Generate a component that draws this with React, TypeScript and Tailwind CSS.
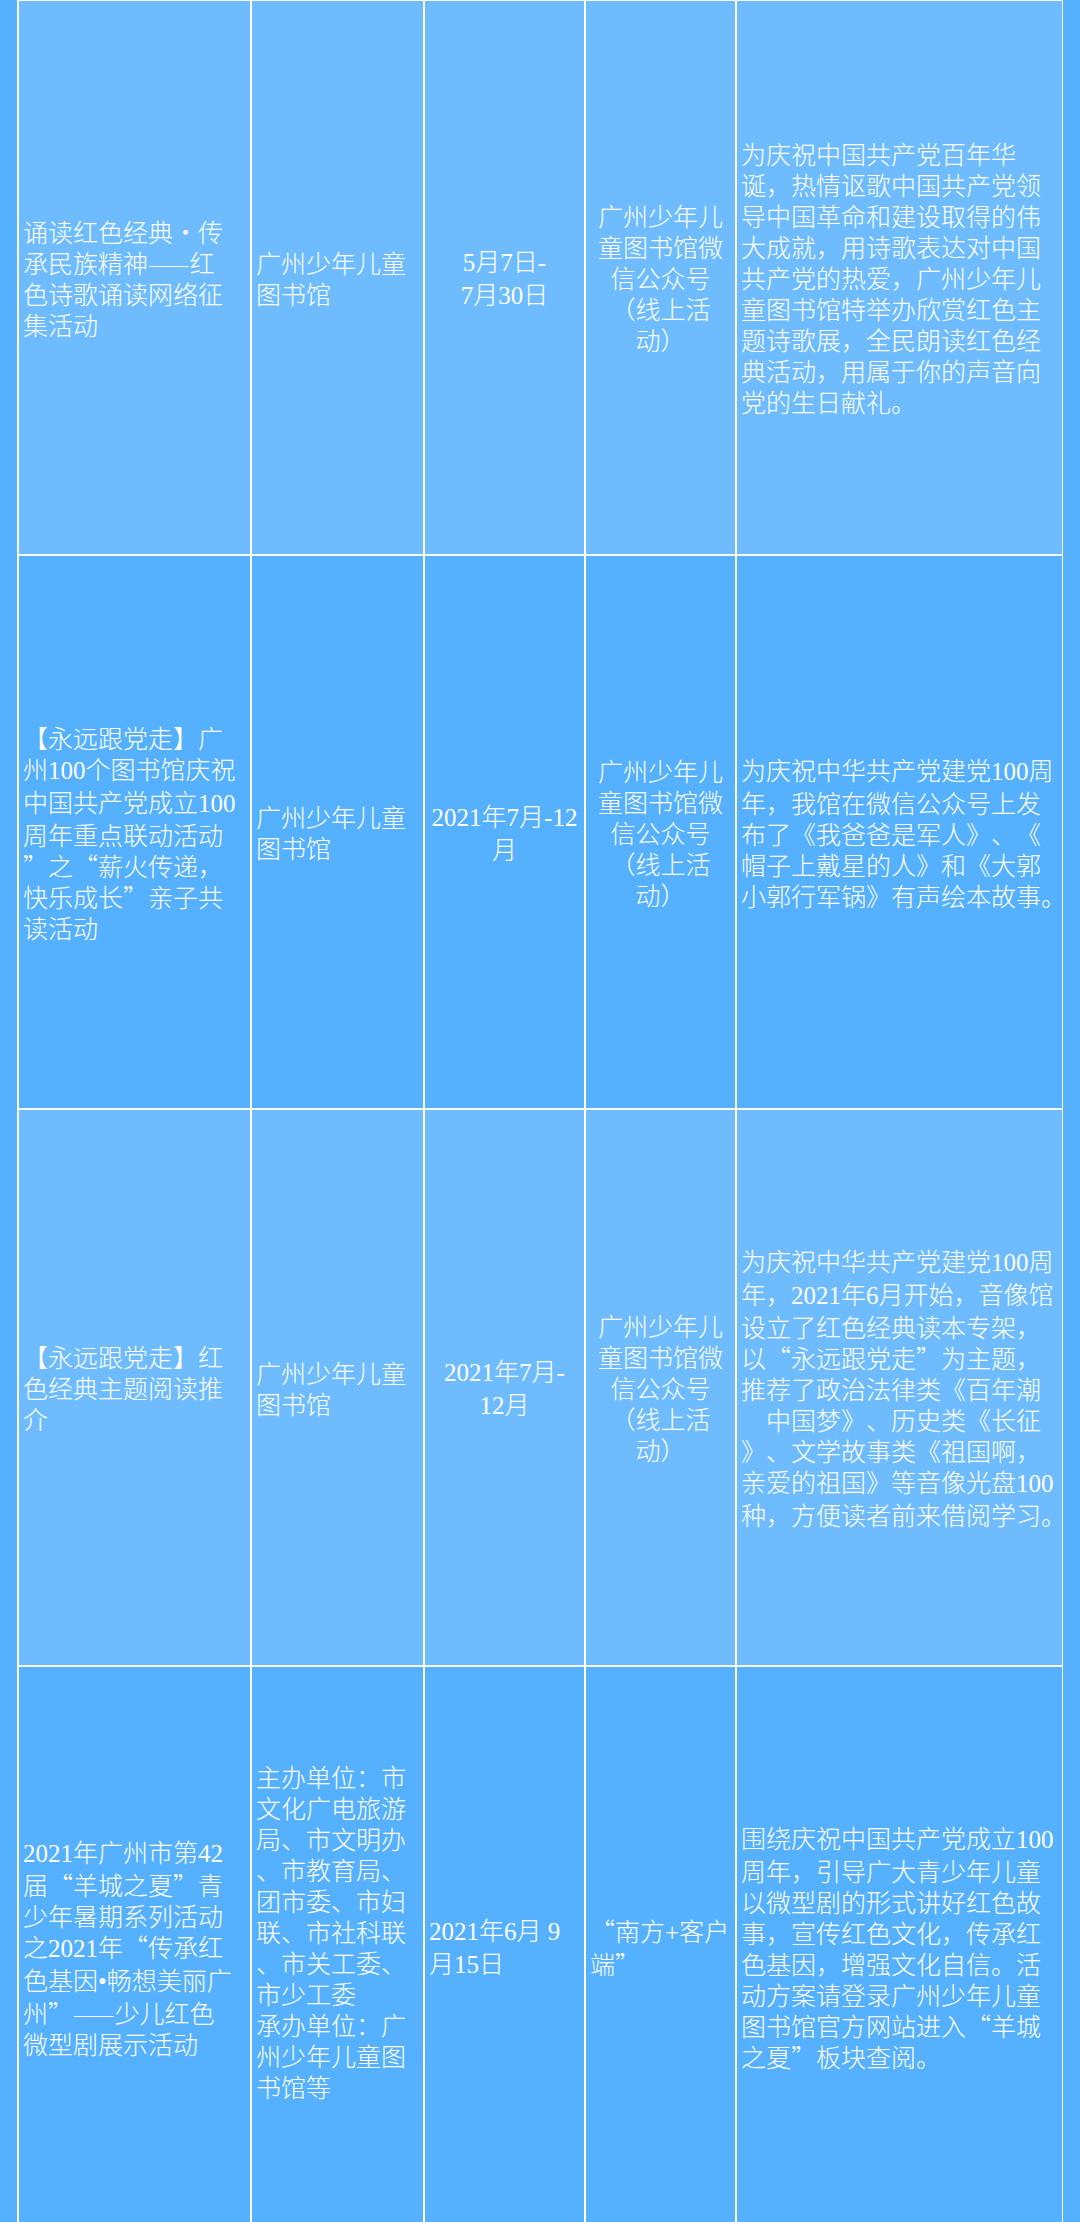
type Cell = {
  lines: string[];
  center?: boolean;
};

type Row = {
  bg: string;
  height: string;
  cells: Cell[];
};

const library = ["广州少年儿童", "图书馆"];
const wechat = ["广州少年儿", "童图书馆微", "信公众号", "（线上活", "动）"];

const rows: Row[] = [
  {
    bg: "bg-[#6ebcfe]",
    height: "h-[553px]",
    cells: [
      { lines: ["诵读红色经典・传", "承民族精神——红", "色诗歌诵读网络征", "集活动"] },
      { lines: library },
      { lines: ["5月7日-", "7月30日"], center: true },
      { lines: wechat, center: true },
      {
        lines: [
          "为庆祝中国共产党百年华",
          "诞，热情讴歌中国共产党领",
          "导中国革命和建设取得的伟",
          "大成就，用诗歌表达对中国",
          "共产党的热爱，广州少年儿",
          "童图书馆特举办欣赏红色主",
          "题诗歌展，全民朗读红色经",
          "典活动，用属于你的声音向",
          "党的生日献礼。",
        ],
      },
    ],
  },
  {
    bg: "bg-[#55b0fe]",
    height: "h-[552px]",
    cells: [
      {
        lines: [
          "【永远跟党走】广",
          "州100个图书馆庆祝",
          "中国共产党成立100",
          "周年重点联动活动",
          "”之“薪火传递，",
          "快乐成长”亲子共",
          "读活动",
        ],
      },
      { lines: library },
      { lines: ["2021年7月-12", "月"], center: true },
      { lines: wechat, center: true },
      {
        lines: [
          "为庆祝中华共产党建党100周",
          "年，我馆在微信公众号上发",
          "布了《我爸爸是军人》、《",
          "帽子上戴星的人》和《大郭",
          "小郭行军锅》有声绘本故事。",
        ],
      },
    ],
  },
  {
    bg: "bg-[#6ebcfe]",
    height: "h-[555px]",
    cells: [
      { lines: ["【永远跟党走】红", "色经典主题阅读推", "介"] },
      { lines: library },
      { lines: ["2021年7月-", "12月"], center: true },
      { lines: wechat, center: true },
      {
        lines: [
          "为庆祝中华共产党建党100周",
          "年，2021年6月开始，音像馆",
          "设立了红色经典读本专架，",
          "以“永远跟党走”为主题，",
          "推荐了政治法律类《百年潮",
          "　中国梦》、历史类《长征",
          "》、文学故事类《祖国啊，",
          "亲爱的祖国》等音像光盘100",
          "种，方便读者前来借阅学习。",
        ],
      },
    ],
  },
  {
    bg: "bg-[#55b0fe]",
    height: "h-[560px]",
    cells: [
      {
        lines: [
          "2021年广州市第42",
          "届“羊城之夏”青",
          "少年暑期系列活动",
          "之2021年“传承红",
          "色基因•畅想美丽广",
          "州”——少儿红色",
          "微型剧展示活动",
        ],
      },
      {
        lines: [
          "主办单位：市",
          "文化广电旅游",
          "局、市文明办",
          "、市教育局、",
          "团市委、市妇",
          "联、市社科联",
          "、市关工委、",
          "市少工委",
          "承办单位：广",
          "州少年儿童图",
          "书馆等",
          "",
        ],
      },
      { lines: ["2021年6月 9", "月15日"] },
      { lines: ["“南方+客户", "端”"] },
      {
        lines: [
          "围绕庆祝中国共产党成立100",
          "周年，引导广大青少年儿童",
          "以微型剧的形式讲好红色故",
          "事，宣传红色文化，传承红",
          "色基因，增强文化自信。活",
          "动方案请登录广州少年儿童",
          "图书馆官方网站进入“羊城",
          "之夏”板块查阅。",
        ],
      },
    ],
  },
];

// latin runs (digits, dashes, bullet) get the serif face, the rest stays CJK
const latin = /([\x20-\x7E\u2022]+)/;
const Line = ({ text }: { text: string }) => {
  if (!text) return <div className="h-[31px]" />;
  const parts = text.split(latin).filter(Boolean);
  return (
    <div className="whitespace-pre">
      {parts.map((p, i) =>
        /^[\x20-\x7E\u2022]+$/.test(p) ? (
          <span key={i} className="font-['Liberation_Serif',serif]">
            {p}
          </span>
        ) : (
          <span key={i}>{p}</span>
        )
      )}
    </div>
  );
};

const App = () => {
  return (
    <div className="w-[1080px] bg-[#55b0fe] px-[17px] overflow-hidden">
      <div className="grid grid-cols-[231px_171px_159px_149px_325px] gap-[2px] bg-white pt-px px-[2px] pb-[2px] font-['Noto_Sans_CJK_SC',sans-serif] font-light text-[25px] leading-[31px] text-white [text-spacing-trim:space-all]">
        {rows.map((row, r) =>
          row.cells.map((cell, c) => (
            <div
              key={`${r}-${c}`}
              className={`${row.bg} ${row.height} flex flex-col justify-center px-[4px] ${
                cell.center ? "items-center text-center" : "items-start text-left"
              }`}
            >
              <div>
                {cell.lines.map((l, i) => (
                  <Line key={i} text={l} />
                ))}
              </div>
            </div>
          ))
        )}
      </div>
    </div>
  );
};

export default App;
